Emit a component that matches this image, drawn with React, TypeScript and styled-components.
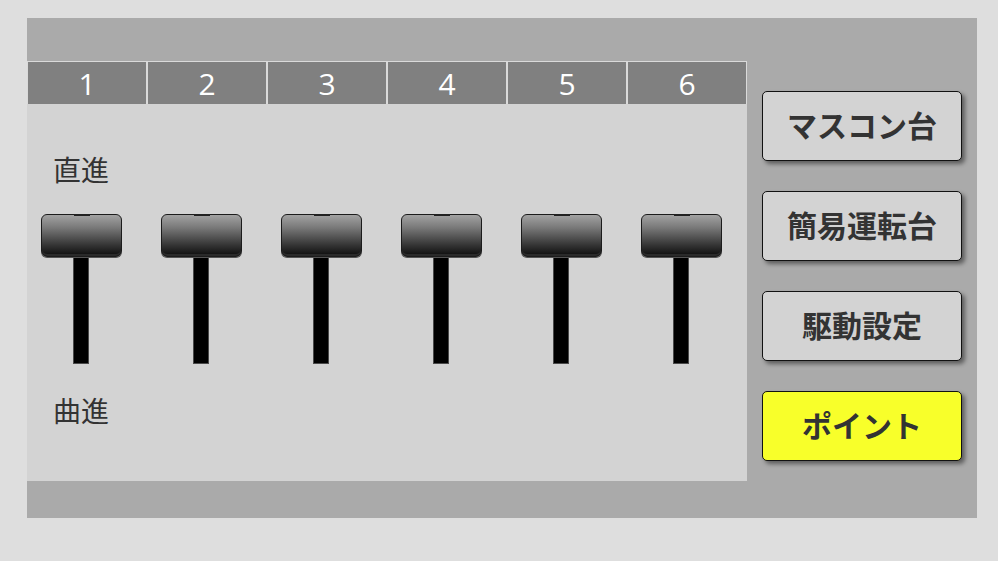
import React from 'react';
import styled, { createGlobalStyle } from 'styled-components';

const GlobalStyle = createGlobalStyle`
  html, body {
    margin: 0;
    padding: 0;
    background: #dedede;
  }
  body {
    font-family: "Noto Sans", "Noto Sans CJK JP", sans-serif;
  }
`;

const Frame = styled.div`
  display: flex;
  align-items: flex-start;
  margin: 18px 0 0 27px;
  width: 950px;
  height: 500px;
  background: #aaaaaa;
`;

const Board = styled.div`
  display: flex;
  flex-direction: column;
  margin-top: 43px;
  width: 720px;
  height: 420px;
  background: #d3d3d3;
`;

const Header = styled.div`
  display: grid;
  grid-template-columns: repeat(6, 120px);
  height: 43px;
`;

const HeaderCell = styled.div`
  display: flex;
  align-items: center;
  justify-content: center;
  background: #808080;
  border: 1px solid #dadada;
  border-bottom: none;
  color: #ffffff;
  font-family: "Open Sans", "Noto Sans", sans-serif;
  font-size: 30px;
  line-height: 1;
  padding-top: 1px;
`;

const Body = styled.div`
  display: flex;
  flex-direction: column;
`;

const Label = styled.div<{ $top: number }>`
  margin-top: ${p => p.$top}px;
  padding-left: 26px;
  font-family: "Noto Sans CJK JP", "Noto Sans", sans-serif;
  font-size: 28px;
  line-height: 32px;
  color: #333333;
`;

const SliderRow = styled.div`
  display: grid;
  grid-template-columns: repeat(6, 120px);
  margin-top: 29px;
`;

const SliderCol = styled.div`
  display: flex;
  flex-direction: column;
  align-items: center;
  padding-right: 12px;
`;

const Knob = styled.div`
  position: relative;
  width: 81px;
  height: 43px;
  box-sizing: border-box;
  border: 1px solid #1c1c1c;
  border-radius: 6px;
  background: linear-gradient(to bottom, #a2a2a2 0%, #7a7a7a 30%, #3a3a3a 70%, #0c0c0c 100%);
  box-shadow: inset 0 -2px 0 #2a2a2a, 0 1px 0 #555;

  &::before {
    content: '';
    position: absolute;
    top: -1px;
    left: 32px;
    width: 16px;
    height: 2px;
    background: #222;
  }
`;

const Track = styled.div`
  width: 16px;
  height: 107px;
  box-sizing: border-box;
  background: #000000;
  border: 1px solid #4a4a4a;
  border-top: none;
`;

const Side = styled.div`
  display: flex;
  flex-direction: column;
  gap: 30px;
  margin: 73px 0 0 15px;
`;

const ModeButton = styled.button<{ $active?: boolean }>`
  display: flex;
  align-items: center;
  justify-content: center;
  width: 200px;
  height: 70px;
  padding: 0 0 5px;
  box-sizing: border-box;
  border: 1px solid #111111;
  border-radius: 5px;
  background: ${p => (p.$active ? '#f8ff2a' : '#d3d3d3')};
  box-shadow: 3px 3px 4px rgba(0, 0, 0, 0.45);
  color: #333333;
  font-family: "Noto Sans CJK JP", "Noto Sans", sans-serif;
  font-size: 30px;
  font-weight: 700;
  line-height: 1;
  cursor: pointer;
`;

const channels = [1, 2, 3, 4, 5, 6];
const modes = ['マスコン台', '簡易運転台', '駆動設定', 'ポイント'];

export default function App() {
  return (
    <>
      <GlobalStyle />
      <Frame>
        <Board>
          <Header>
            {channels.map(n => (
              <HeaderCell key={n}>{n}</HeaderCell>
            ))}
          </Header>
          <Body>
            <Label $top={49}>直進</Label>
            <SliderRow>
              {channels.map(n => (
                <SliderCol key={n}>
                  <Knob />
                  <Track />
                </SliderCol>
              ))}
            </SliderRow>
            <Label $top={30}>曲進</Label>
          </Body>
        </Board>
        <Side>
          {modes.map(m => (
            <ModeButton key={m} $active={m === 'ポイント'}>
              {m}
            </ModeButton>
          ))}
        </Side>
      </Frame>
    </>
  );
}
